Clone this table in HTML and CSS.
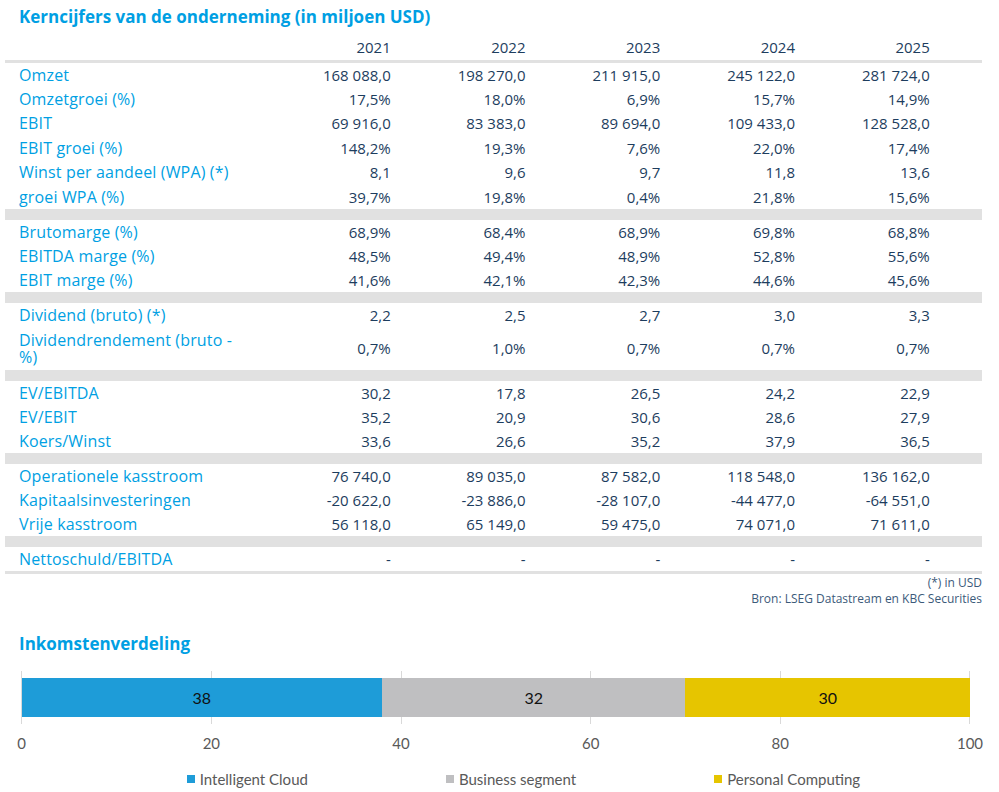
FILE: index.html
```html
<!DOCTYPE html>
<html lang="nl">
<head>
<meta charset="utf-8">
<title>Kerncijfers</title>
<link rel="stylesheet" href="styles.css">
</head>
<body>
<div class="page">
  <h1 class="title">Kerncijfers van de onderneming (in miljoen USD)</h1>
  <table class="kc">
    <colgroup>
      <col class="c-label"><col class="c-num"><col class="c-num"><col class="c-num"><col class="c-num"><col class="c-num"><col class="c-tail">
    </colgroup>
    <thead>
      <tr><th></th><th>2021</th><th>2022</th><th>2023</th><th>2024</th><th>2025</th><th></th></tr>
    </thead>
    <tbody>
      <tr class="g1"><td>Omzet</td><td>168 088,0</td><td>198 270,0</td><td>211 915,0</td><td>245 122,0</td><td>281 724,0</td><td></td></tr>
      <tr class="g1"><td>Omzetgroei (%)</td><td>17,5%</td><td>18,0%</td><td>6,9%</td><td>15,7%</td><td>14,9%</td><td></td></tr>
      <tr class="g1"><td>EBIT</td><td>69 916,0</td><td>83 383,0</td><td>89 694,0</td><td>109 433,0</td><td>128 528,0</td><td></td></tr>
      <tr class="g1"><td>EBIT groei (%)</td><td>148,2%</td><td>19,3%</td><td>7,6%</td><td>22,0%</td><td>17,4%</td><td></td></tr>
      <tr class="g1"><td>Winst per aandeel (WPA) (*)</td><td>8,1</td><td>9,6</td><td>9,7</td><td>11,8</td><td>13,6</td><td></td></tr>
      <tr class="g1"><td>groei WPA (%)</td><td>39,7%</td><td>19,8%</td><td>0,4%</td><td>21,8%</td><td>15,6%</td><td></td></tr>
      <tr class="sep"><td colspan="7"></td></tr>
      <tr><td>Brutomarge (%)</td><td>68,9%</td><td>68,4%</td><td>68,9%</td><td>69,8%</td><td>68,8%</td><td></td></tr>
      <tr><td>EBITDA marge (%)</td><td>48,5%</td><td>49,4%</td><td>48,9%</td><td>52,8%</td><td>55,6%</td><td></td></tr>
      <tr><td>EBIT marge (%)</td><td>41,6%</td><td>42,1%</td><td>42,3%</td><td>44,6%</td><td>45,6%</td><td></td></tr>
      <tr class="sep"><td colspan="7"></td></tr>
      <tr><td>Dividend (bruto) (*)</td><td>2,2</td><td>2,5</td><td>2,7</td><td>3,0</td><td>3,3</td><td></td></tr>
      <tr class="tall"><td>Dividendrendement (bruto - %)</td><td>0,7%</td><td>1,0%</td><td>0,7%</td><td>0,7%</td><td>0,7%</td><td></td></tr>
      <tr class="sep"><td colspan="7"></td></tr>
      <tr><td>EV/EBITDA</td><td>30,2</td><td>17,8</td><td>26,5</td><td>24,2</td><td>22,9</td><td></td></tr>
      <tr><td>EV/EBIT</td><td>35,2</td><td>20,9</td><td>30,6</td><td>28,6</td><td>27,9</td><td></td></tr>
      <tr><td>Koers/Winst</td><td>33,6</td><td>26,6</td><td>35,2</td><td>37,9</td><td>36,5</td><td></td></tr>
      <tr class="sep"><td colspan="7"></td></tr>
      <tr><td>Operationele kasstroom</td><td>76 740,0</td><td>89 035,0</td><td>87 582,0</td><td>118 548,0</td><td>136 162,0</td><td></td></tr>
      <tr><td>Kapitaalsinvesteringen</td><td>-20 622,0</td><td>-23 886,0</td><td>-28 107,0</td><td>-44 477,0</td><td>-64 551,0</td><td></td></tr>
      <tr><td>Vrije kasstroom</td><td>56 118,0</td><td>65 149,0</td><td>59 475,0</td><td>74 071,0</td><td>71 611,0</td><td></td></tr>
      <tr class="sep"><td colspan="7"></td></tr>
      <tr class="last"><td>Nettoschuld/EBITDA</td><td>-</td><td>-</td><td>-</td><td>-</td><td>-</td><td></td></tr>
    </tbody>
  </table>
  <div class="notes">
    <div>(*) in USD</div>
    <div>Bron: LSEG Datastream en KBC Securities</div>
  </div>

  <h2 class="title sub">Inkomstenverdeling</h2>
  <div class="chart">
    <div class="plot">
      <span class="grid" style="left:0%"></span>
      <span class="grid" style="left:20%"></span>
      <span class="grid" style="left:40%"></span>
      <span class="grid" style="left:60%"></span>
      <span class="grid" style="left:80%"></span>
      <span class="grid" style="left:100%"></span>
      <div class="bar">
        <div class="seg seg-cloud" style="width:38%">38</div>
        <div class="seg seg-business" style="width:32%">32</div>
        <div class="seg seg-personal" style="width:30%">30</div>
      </div>
    </div>
    <div class="axis">
      <span class="tick" style="left:0%">0</span>
      <span class="tick" style="left:20%">20</span>
      <span class="tick" style="left:40%">40</span>
      <span class="tick" style="left:60%">60</span>
      <span class="tick" style="left:80%">80</span>
      <span class="tick" style="left:100%">100</span>
    </div>
    <div class="legend">
      <span class="item"><i class="sw sw-cloud"></i>Intelligent Cloud</span>
      <span class="item"><i class="sw sw-business"></i>Business segment</span>
      <span class="item"><i class="sw sw-personal"></i>Personal Computing</span>
    </div>
  </div>
</div>
</body>
</html>
```

FILE: styles.css
```css
html, body {
  margin: 0;
  padding: 0;
  background: #ffffff;
}

body {
  font-family: "Open Sans", "Noto Sans", sans-serif;
  color: #1d3d5e;
}

.page {
  width: 977px;
  padding-left: 5px;
}

.title {
  margin: 0;
  padding: 6px 0 0 14px;
  font-size: 17px;
  line-height: 22px;
  font-weight: 700;
  color: #009fe3;
}

.kc {
  width: 977px;
  border-collapse: collapse;
  table-layout: fixed;
  font-size: 15px;
}

.c-label { width: 251px; }
.c-num { width: 134.75px; }
.c-tail { width: 52.25px; }

.kc th {
  height: 28px;
  padding: 0 0 4px 0;
  vertical-align: bottom;
  text-align: right;
  font-weight: 400;
  line-height: 18px;
  color: #1d3d5e;
  border-bottom: 3px solid #e1e1e1;
}

.kc td {
  padding: 3.5px 0;
  line-height: 17px;
  text-align: right;
  color: #1d3d5e;
  white-space: nowrap;
}

.kc td:first-child {
  text-align: left;
  padding-left: 14px;
  padding-right: 8px;
  color: #009fe3;
  font-size: 16px;
  letter-spacing: 0.15px;
  white-space: normal;
}

.kc tr.g1 td {
  padding-top: 3.7px;
  padding-bottom: 3.7px;
}

.kc tr.tall td {
  padding-top: 4.5px;
  padding-bottom: 4.5px;
}

.kc tr.sep td {
  height: 11px;
  padding: 0;
  background: #e1e1e1;
}

.kc tr.last td {
  border-bottom: 3px solid #e1e1e1;
}

.notes {
  padding-top: 1px;
  text-align: right;
  font-size: 12px;
  line-height: 16px;
  color: #3c5a7a;
}

.title.sub {
  padding-top: 26px;
}

.chart {
  padding-left: 16.7px;
  font-family: "Lato", "Open Sans", sans-serif;
}

.plot {
  position: relative;
  width: 948.3px;
  height: 53px;
  margin-top: 16px;
  box-sizing: border-box;
  padding-top: 7px;
}

.grid {
  position: absolute;
  top: 0;
  bottom: 0;
  width: 1px;
  margin-left: -0.5px;
  background: #d9d9d9;
}

.bar {
  position: relative;
  display: flex;
  height: 39px;
}

.seg {
  display: flex;
  align-items: center;
  justify-content: center;
  font-size: 16px;
  color: #111111;
}

.seg-cloud { background: #1e9cd8; }
.seg-business { background: #bfbfc1; }
.seg-personal { background: #e6c500; }

.axis {
  position: relative;
  width: 948.3px;
  height: 18px;
  margin-top: 10px;
}

.tick {
  position: absolute;
  top: 0;
  transform: translateX(-50%);
  font-size: 15px;
  line-height: 18px;
  color: #595959;
}

.legend {
  display: flex;
  gap: 138px;
  margin-top: 18px;
  padding-left: 165px;
  font-size: 15px;
  line-height: 18px;
  color: #595959;
}

.item {
  display: flex;
  align-items: center;
  white-space: nowrap;
}

.sw {
  display: inline-block;
  width: 8px;
  height: 8px;
  margin-right: 5px;
}

.sw-cloud { background: #1e9cd8; }
.sw-business { background: #bfbfc1; }
.sw-personal { background: #e6c500; }
```
